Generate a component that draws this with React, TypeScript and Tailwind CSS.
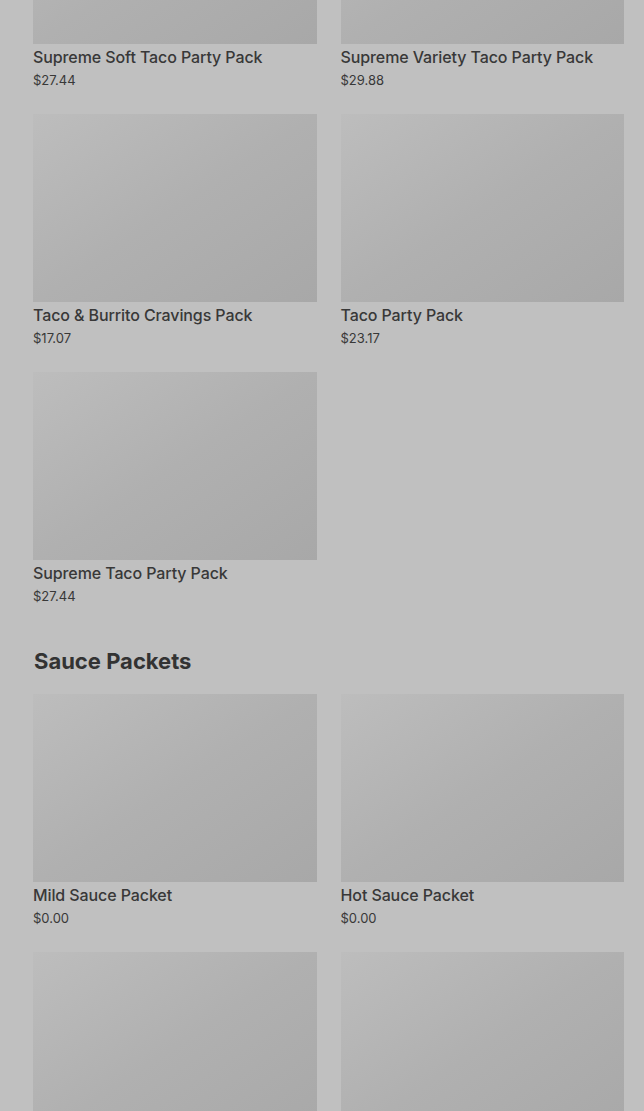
const partyPacks = [
  { name: "Supreme Soft Taco Party Pack", price: "$27.44" },
  { name: "Supreme Variety Taco Party Pack", price: "$29.88" },
  { name: "Taco & Burrito Cravings Pack", price: "$17.07" },
  { name: "Taco Party Pack", price: "$23.17" },
  { name: "Supreme Taco Party Pack", price: "$27.44" },
]

const sauces = [
  { name: "Mild Sauce Packet", price: "$0.00" },
  { name: "Hot Sauce Packet", price: "$0.00" },
  { name: "", price: "" },
  { name: "", price: "" },
]

function ItemCard({ name, price }: { name: string; price: string }) {
  return (
    <div className="flex flex-col">
      <div className="h-[188px] w-full bg-linear-to-br from-[#bdbdbd] via-[#b0b0b0] to-[#a8a8a8]"></div>
      {name && (
        <>
          <div className="mt-[3px] text-[16px] leading-5 font-medium tracking-[-0.1px] text-[#383838]">{name}</div>
          <div className="mt-[3px] text-[13px] leading-5 text-[#383838]">{price}</div>
        </>
      )}
    </div>
  )
}

export default function App() {
  return (
    <div
      className="h-[1111px] w-full overflow-hidden bg-[#c0c0c0]"
      style={{ fontFamily: "Inter, 'Noto Sans', sans-serif" }}
    >
      <div className="-mt-[144px] pl-[33px] pr-[20px]">
        {/* Party packs */}
        <div className="grid grid-cols-2 gap-x-[24px] gap-y-[24px]">
          {partyPacks.map((item, i) => (
            <ItemCard key={i} {...item} />
          ))}
        </div>

        {/* Sauce Packets */}
        <h2 className="mt-[39px] mb-[17px] pl-px text-[22px] leading-8 font-bold text-[#333333]">
          Sauce Packets
        </h2>
        <div className="grid grid-cols-2 gap-x-[24px] gap-y-[24px]">
          {sauces.map((item, i) => (
            <ItemCard key={i} {...item} />
          ))}
        </div>
      </div>
    </div>
  )
}
